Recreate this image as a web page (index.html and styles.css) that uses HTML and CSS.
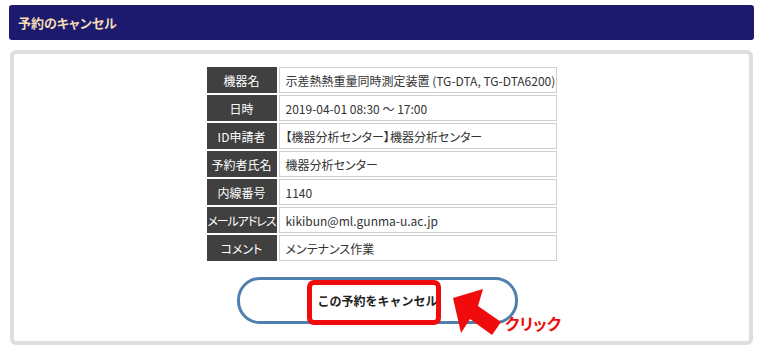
FILE: index.html
```html
<!DOCTYPE html>
<html lang="ja">
<head>
  <meta charset="UTF-8" />
  <title>予約のキャンセル</title>
  <link rel="stylesheet" href="styles.css">
</head>
<body>

  <!-- title bar -->
  <h2 class="title-bar">予約のキャンセル</h2>

  <!-- cancel panel -->
  <div class="panel">
    <table class="detail">
      <tr><th>機器名</th><td>示差熱熱重量同時測定装置 (TG-DTA, TG-DTA6200)</td></tr>
      <tr><th>日時</th><td>2019-04-01 08:30 ～ 17:00</td></tr>
      <tr><th>ID申請者</th><td>【機器分析センター】機器分析センター</td></tr>
      <tr><th>予約者氏名</th><td>機器分析センター</td></tr>
      <tr><th>内線番号</th><td>1140</td></tr>
      <tr><th class="tight">メールアドレス</th><td>kikibun@ml.gunma-u.ac.jp</td></tr>
      <tr><th>コメント</th><td>メンテナンス作業</td></tr>
    </table>

    <div class="actions">
      <button class="cancel-btn" type="button">この予約をキャンセル</button>

      <!-- annotation -->
      <span class="mark-box"></span>
      <svg class="mark-arrow" width="62" height="56" viewBox="0 0 62 56">
        <polygon points="2,9 32,0 27,17 50,33 41,46 19,30 10,44" fill="#f00c0c"/>
      </svg>
      <span class="mark-label">クリック</span>
    </div>
  </div>

</body>
</html>
```

FILE: styles.css
```css
body {
  margin: 0;
  padding: 5px 6px 0 9px;
  font-family: "Noto Sans CJK JP", "Noto Sans", sans-serif;
  font-feature-settings: "palt";
  background: #fff;
  color: #333;
}
.title-bar {
  margin: 0;
  height: 35px;
  line-height: 35px;
  padding: 0 9px;
  font-size: 13px;
  font-weight: bold;
  color: #f3dcb4;
  background: #1b1a6e;
  border-radius: 3px;
}
.panel {
  margin: 10px 1px 0 1px;
  border: 4px solid #dedede;
  border-radius: 6px;
  padding: 11px 0 17px;
}
.detail {
  margin: 0 auto;
  table-layout: fixed;
  width: 354px;
  border-collapse: separate;
  border-spacing: 2px;
  font-size: 12px;
}
.detail th {
  width: 70px;
  height: 25px;
  padding: 0;
  background: #404040;
  color: #fff;
  font-weight: normal;
  text-align: center;
  white-space: nowrap;
}
.detail th.tight { letter-spacing: -1.1px; }
.detail td {
  height: 24px;
  padding: 0 3px 0 6px;
  border: 1px solid #cfcfcf;
  white-space: nowrap;
  overflow: hidden;
}
.actions {
  position: relative;
  display: flex;
  justify-content: center;
  margin-top: 14px;
  padding-right: 8px;
}
.cancel-btn {
  width: 281px;
  height: 47px;
  border: 3px solid #4f7fae;
  border-radius: 23px;
  background: #fff;
  font-family: inherit;
  font-size: 12px;
  font-weight: bold;
  color: #222;
  cursor: pointer;
}
.mark-box {
  position: absolute;
  left: 293px;
  top: 3px;
  width: 124px;
  height: 35px;
  border: 5px solid #f00c0c;
  border-radius: 7px;
}
.mark-arrow {
  position: absolute;
  left: 437px;
  top: 12px;
}
.mark-label {
  position: absolute;
  left: 491px;
  top: 34px;
  font-size: 16px;
  font-weight: bold;
  color: #f00c0c;
}
```
